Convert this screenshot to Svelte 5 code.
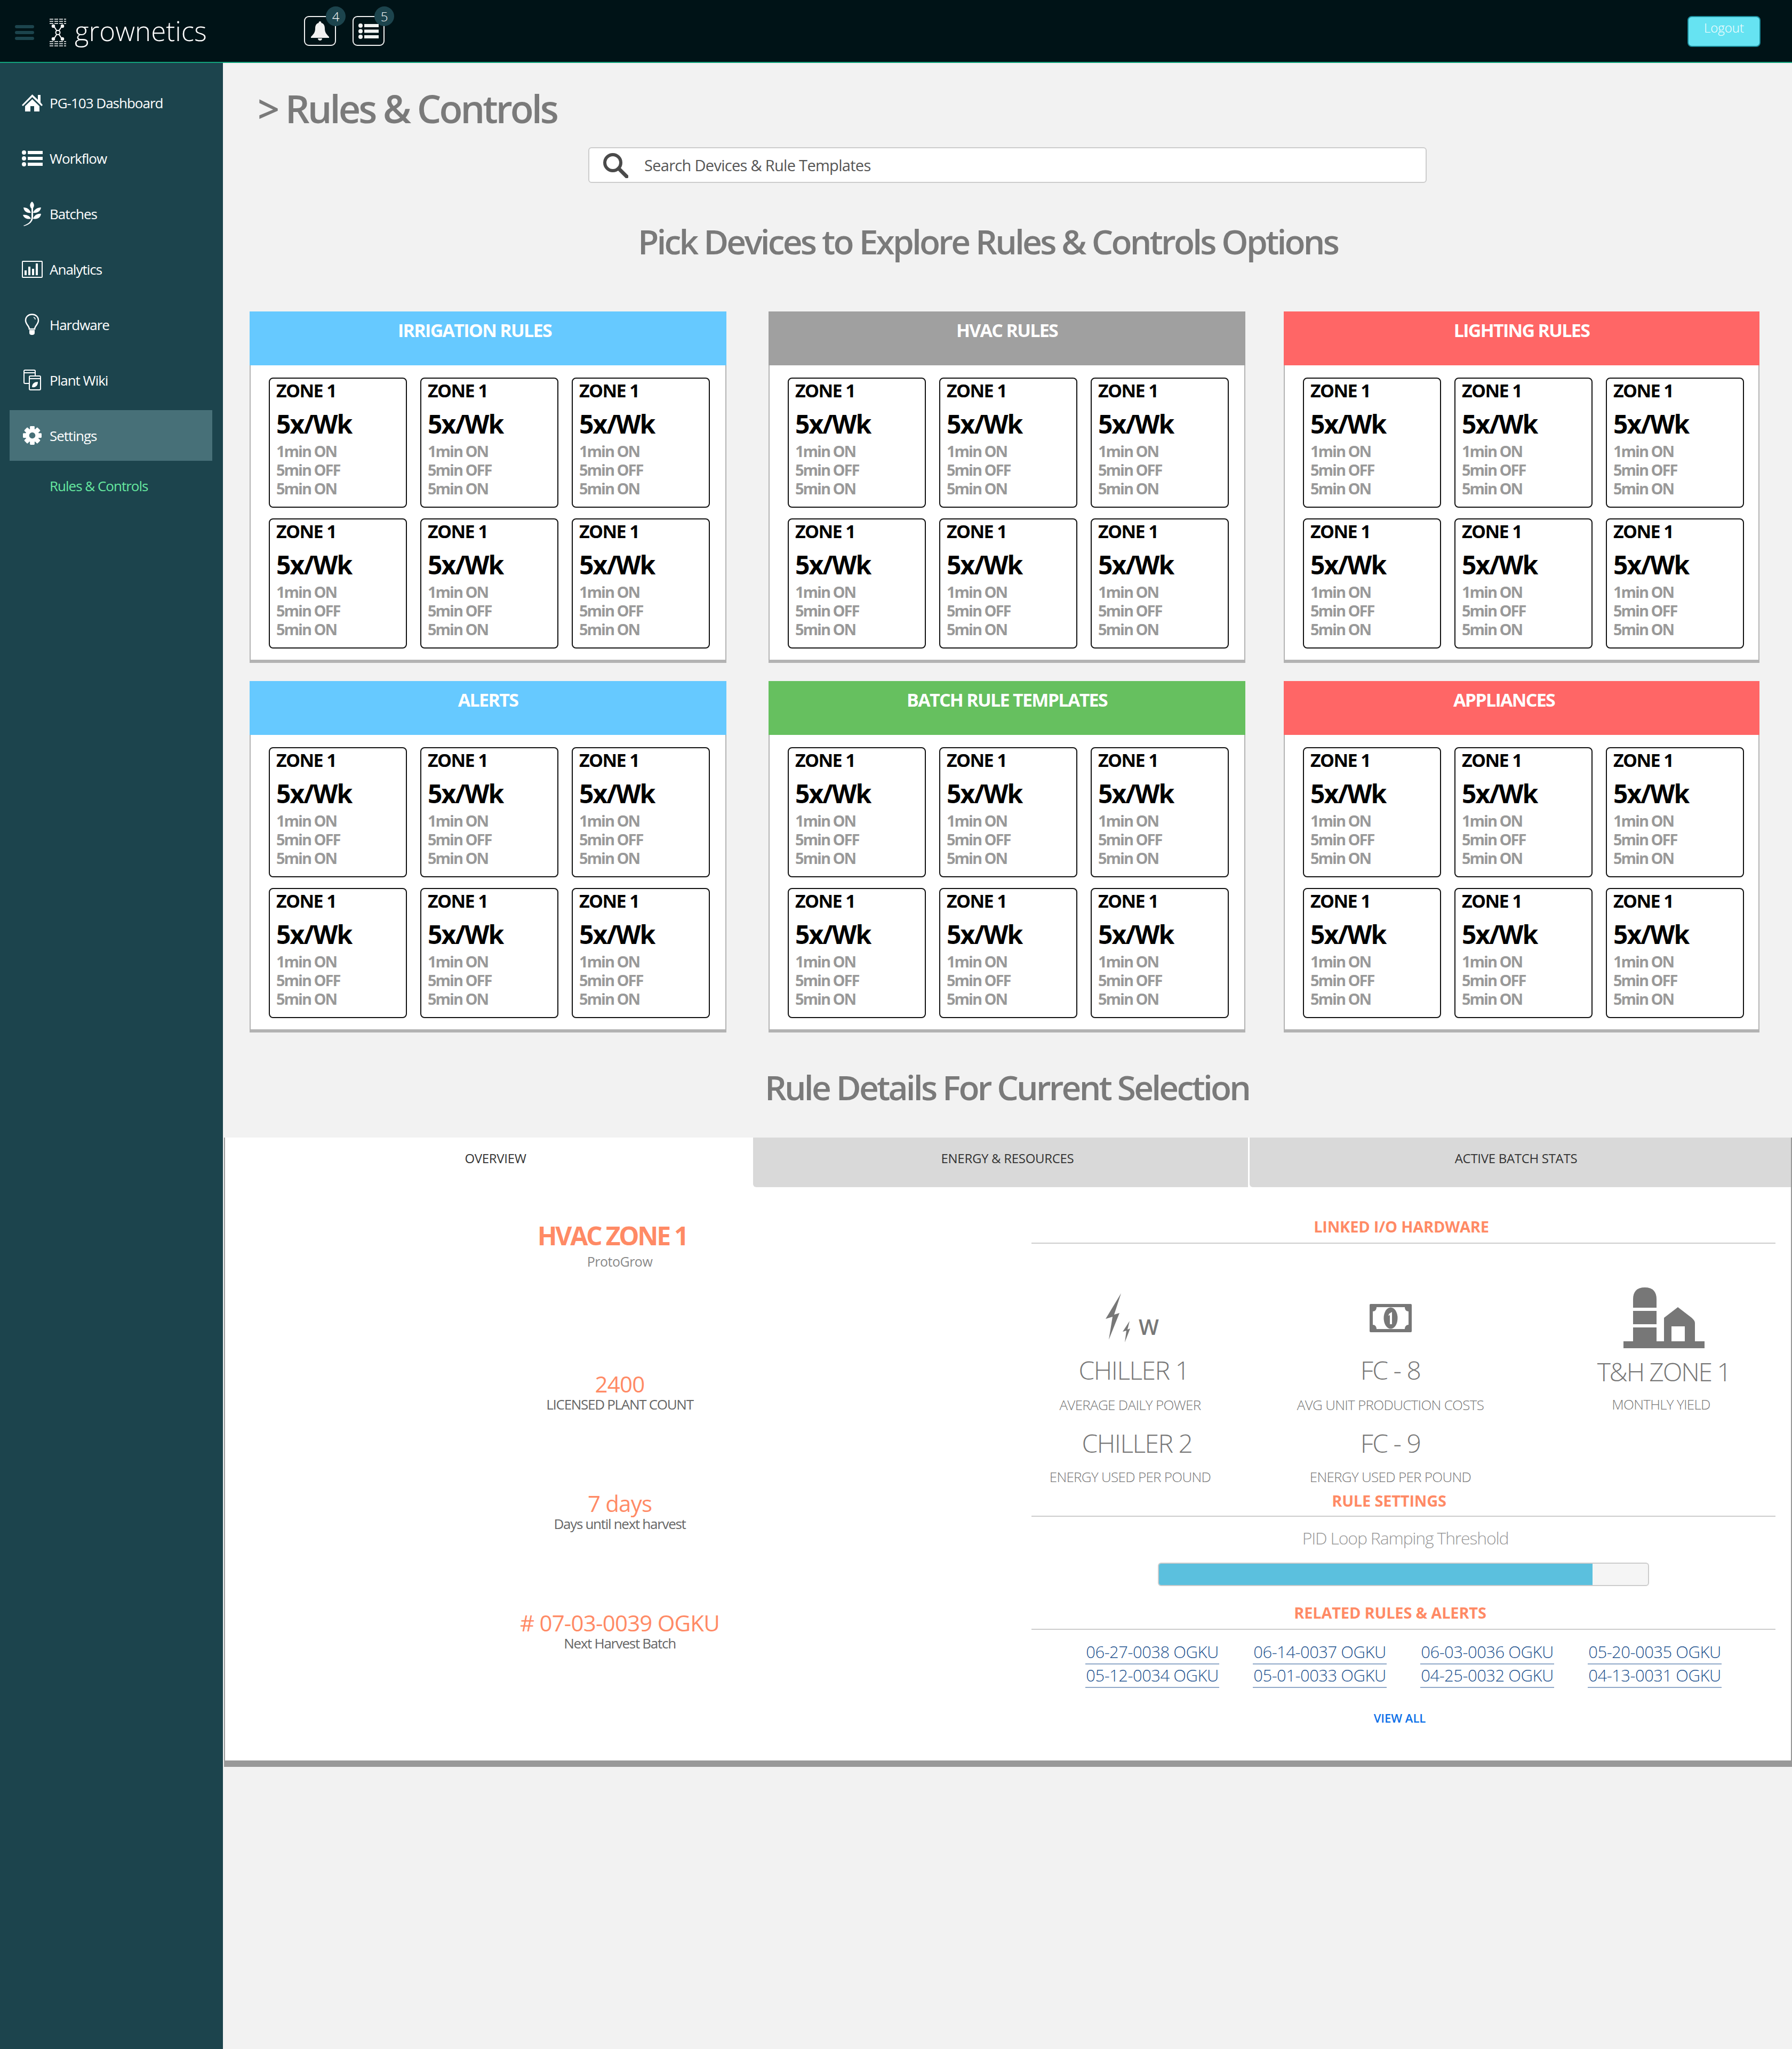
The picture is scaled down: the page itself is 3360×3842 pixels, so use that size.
<script>
	const navItems = [
		{ label: 'PG-103 Dashboard', icon: 'home' },
		{ label: 'Workflow', icon: 'list' },
		{ label: 'Batches', icon: 'plant' },
		{ label: 'Analytics', icon: 'chart' },
		{ label: 'Hardware', icon: 'bulb' },
		{ label: 'Plant Wiki', icon: 'wiki' },
		{ label: 'Settings', icon: 'gear', active: true }
	];

	const panels = [
		{ title: 'IRRIGATION RULES', color: '#66c9ff', shift: 50 },
		{ title: 'HVAC RULES', color: '#a0a0a0', shift: 0 },
		{ title: 'LIGHTING RULES', color: '#ff6666', shift: 0 },
		{ title: 'ALERTS', color: '#66c9ff', shift: 0 },
		{ title: 'BATCH RULE TEMPLATES', color: '#66c05f', shift: 0 },
		{ title: 'APPLIANCES', color: '#ff6666', shift: 66 }
	];

	const cards = [0, 1, 2, 3, 4, 5];

	const stats = [
		{ value: '2400', label: 'LICENSED PLANT COUNT' },
		{ value: '7 days', label: 'Days until next harvest' },
		{ value: '# 07-03-0039 OGKU', label: 'Next Harvest Batch' }
	];

	const links = [
		'06-27-0038 OGKU',
		'06-14-0037 OGKU',
		'06-03-0036 OGKU',
		'05-20-0035 OGKU',
		'05-12-0034 OGKU',
		'05-01-0033 OGKU',
		'04-25-0032 OGKU',
		'04-13-0031 OGKU'
	];
</script>

<div class="app">
	<header class="topbar">
		<div class="burger"><span></span><span></span><span></span></div>
		<svg class="logo" viewBox="0 0 33 52" fill="none" stroke="#fff" stroke-width="1.500">
			<path d="M1 1h31M1 5h31M1 9h31M1 43h31M1 47h31M1 51h31" stroke-dasharray="7 2" />
			<path d="M9 14l15 24M24 14L9 38" stroke-width="2" />
			<circle cx="8" cy="14" r="2.500" fill="#fff" />
			<circle cx="25" cy="14" r="2.500" fill="#fff" />
			<circle cx="16.500" cy="26" r="4" fill="#001317" stroke-width="2" />
			<circle cx="8" cy="38" r="2.500" fill="#fff" />
			<circle cx="25" cy="38" r="2.500" fill="#fff" />
		</svg>
		<span class="brand">grownetics</span>
		<div class="alert-box first">
			<svg viewBox="0 0 34 36" width="34" height="36" fill="#f2f2f2">
				<path d="M17 0c1.500 0 2.500 1 2.500 3 4.500 1.200 6.500 5 6.500 10 0 8 3 11 8 16v2H0v-2c5-5 8-8 8-16 0-5 2-8.800 6.500-10C14.500 1 15.500 0 17 0z" />
				<path d="M13 32h8c0 2.500-1.800 4-4 4s-4-1.500-4-4z" />
			</svg>
			<span class="badge">4</span>
		</div>
		<div class="alert-box">
			<svg viewBox="0 0 38 29" width="38" height="29" fill="#f2f2f2">
				<circle cx="4" cy="4" r="4" /><circle cx="4" cy="14.500" r="4" /><circle cx="4" cy="25" r="4" />
				<rect x="11" y="1" width="27" height="6" /><rect x="11" y="11.500" width="27" height="6" /><rect x="11" y="22" width="27" height="6" />
			</svg>
			<span class="badge">5</span>
		</div>
		<button class="logout">Logout</button>
	</header>

	<div class="layout">
		<aside class="sidebar">
			{#each navItems as item}
				<div class="nav-item" class:active={item.active}>
					<span class="nav-icon">
						{#if item.icon === 'home'}
							<svg viewBox="0 0 39 32" width="39" height="32" fill="#fff">
								<path d="M19.500 0L30 10V1h5v14l4 5-2 2L19.500 5 2 22l-2-2z" />
								<path d="M6 22L19.500 9 33 22v10H23V22h-7v10H6z" />
							</svg>
						{:else if item.icon === 'list'}
							<svg viewBox="0 0 39 30" width="39" height="30" fill="#fff">
								<circle cx="4" cy="4" r="4" /><circle cx="4" cy="15" r="4" /><circle cx="4" cy="26" r="4" />
								<rect x="11" y="1" width="28" height="6" /><rect x="11" y="12" width="28" height="6" /><rect x="11" y="23" width="28" height="6" />
							</svg>
						{:else if item.icon === 'plant'}
							<svg viewBox="0 0 36 46" width="36" height="46" fill="#fff">
								<path d="M18 0c5 4 5 10 0 14-5-4-5-10 0-14z" />
								<path d="M2 11c7 0 12 4 14 10-8 1-13-3-14-10zM35 11c-1 7-7 11-15 10 2-6 8-10 15-10z" />
								<path d="M1 25c7-1 13 2 15 7-7 2-13-1-15-7zM35 23c-1 7-7 11-15 9 2-6 8-10 15-9z" />
								<path d="M17 12h3v17c0 8-6 14-17 17l-1-1c9-3 15-8 15-16z" />
							</svg>
						{:else if item.icon === 'chart'}
							<svg viewBox="0 0 39 32" width="39" height="32" fill="#fff">
								<path fill-rule="evenodd" d="M2 0h35a2 2 0 0 1 2 2v28a2 2 0 0 1-2 2H2a2 2 0 0 1-2-2V2a2 2 0 0 1 2-2zm0 2v28h35V2z" />
								<rect x="5" y="18" width="4" height="9" /><rect x="12" y="11" width="4" height="16" /><rect x="19" y="15" width="4" height="12" /><rect x="26" y="5" width="4" height="22" />
							</svg>
						{:else if item.icon === 'bulb'}
							<svg viewBox="0 0 28 41" width="28" height="41" fill="none" stroke="#fff" stroke-width="2.500">
								<path d="M9 29c0-6-7-9-7-16C2 6 7 1.500 14 1.500S26 6 26 13c0 7-7 10-7 16z" />
								<path d="M9 31h10v5c0 3-2 4-5 4s-5-1-5-4z" fill="#fff" stroke="none" />
								<path d="M17 7c2 .5 3 2 3 4" stroke-width="1.500" />
							</svg>
						{:else if item.icon === 'wiki'}
							<svg viewBox="0 0 33 39" width="33" height="39" fill="none" stroke="#fff" stroke-width="2">
								<path d="M10 26H3a2 2 0 0 1-2-2V3a2 2 0 0 1 2-2h17a2 2 0 0 1 2 2v8" />
								<path d="M1 6h21" />
								<rect x="11" y="12" width="21" height="26" rx="2" />
								<path d="M11 17h21" />
								<path d="M16 33c0-7 5-10 11-10 0 7-4 11-11 10z" fill="#fff" stroke="none" />
							</svg>
						{:else}
							<svg viewBox="-18 -18 36 36" width="35" height="35">
								<g fill="#fff">
									{#each [0, 45, 90, 135, 180, 225, 270, 315] as a}
										<rect x="-4.500" y="-18" width="9" height="10" rx="1.500" transform="rotate({a})" />
									{/each}
								</g>
								<circle r="9.500" fill="none" stroke="#fff" stroke-width="7" />
							</svg>
						{/if}
					</span>
					<span>{item.label}</span>
				</div>
			{/each}
			<div class="nav-sub">Rules &amp; Controls</div>
		</aside>

		<main class="content">
			<h1 class="page-title">&gt; Rules &amp; Controls</h1>

			<div class="search">
				<svg viewBox="0 0 48 48" width="48" height="48" fill="none" stroke="#4a4a4a" stroke-width="6">
					<circle cx="19" cy="19" r="15" />
					<path d="M30 30l15 15" stroke-width="7" stroke-linecap="round" />
				</svg>
				<span>Search Devices &amp; Rule Templates</span>
			</div>

			<h2 class="section-head pick">Pick Devices to Explore Rules &amp; Controls Options</h2>

			<div class="panels">
				{#each panels as panel}
					<section class="panel">
						<div class="panel-head" style="background: {panel.color}; padding-right: {panel.shift}px">{panel.title}</div>
						<div class="panel-body">
							{#each cards as c}
								<div class="card">
									<div class="zone">ZONE 1</div>
									<div class="rate">5x/Wk</div>
									<div class="times">1min ON<br />5min OFF<br />5min ON</div>
								</div>
							{/each}
						</div>
					</section>
				{/each}
			</div>

			<h2 class="section-head details-head">Rule Details For Current Selection</h2>

			<section class="details">
				<div class="tabs">
					<div class="tab current">OVERVIEW</div>
					<div class="tab second">ENERGY &amp; RESOURCES</div>
					<div class="tab third">ACTIVE BATCH STATS</div>
				</div>
				<div class="details-body">
					<div class="overview">
						<div class="zone-name">HVAC ZONE 1</div>
						<div class="maker">ProtoGrow</div>
						{#each stats as s}
							<div class="stat">
								<div class="stat-value">{s.value}</div>
								<div class="stat-label">{s.label}</div>
							</div>
						{/each}
					</div>

					<div class="linked">
						<div class="sec-title" style="padding-right: 8px">LINKED I/O HARDWARE</div>
						<div class="hw-grid">
							<div class="hw">
								<div class="hw-icon bolt-wrap">
									<svg viewBox="0 0 48 92" width="48" height="92" fill="#777">
										<path d="M30 0L1 48l13-4L7 87l20-50-10 3z" />
										<path d="M46 52L33 72l7-2-3 22 10-26-5 2z" />
									</svg>
									<span class="watt">W</span>
								</div>
								<div class="hw-val nudge-a">CHILLER 1</div>
								<div class="hw-label">AVERAGE DAILY POWER</div>
							</div>
							<div class="hw">
								<div class="hw-icon">
									<svg viewBox="0 0 79 53" width="79" height="53">
										<rect width="79" height="53" rx="2" fill="#777" />
										<path d="M13 6h53c0 5 3 8 7 8v25c-4 0-7 3-7 8H13c0-5-3-8-7-8V14c4 0 7-3 7-8z" fill="#fff" />
										<ellipse cx="39.500" cy="26.500" rx="13" ry="20" fill="#777" />
										<path d="M37 18l5-3v23h-4V21l-3 1z" fill="#fff" />
									</svg>
								</div>
								<div class="hw-val">FC - 8</div>
								<div class="hw-label">AVG UNIT PRODUCTION COSTS</div>
							</div>
							<div class="hw">
								<div class="hw-icon">
									<svg viewBox="0 0 152 114" width="152" height="114" fill="#777">
										<path d="M18 38V22C18 8 25 0 40 0s22 8 22 22v16z" />
										<rect x="18" y="44" width="44" height="25" />
										<rect x="18" y="75" width="44" height="26" />
										<path d="M76 57l26-20 26 20c4 4 6 6 6 10v34h-19V73H90v28H76z" />
										<rect y="101" width="152" height="13" />
									</svg>
								</div>
								<div class="hw-val tall">T&amp;H ZONE 1</div>
								<div class="hw-label tall-label">MONTHLY YIELD</div>
							</div>
							<div class="hw row-two">
								<div class="hw-val nudge-b">CHILLER 2</div>
								<div class="hw-label">ENERGY USED PER POUND</div>
							</div>
							<div class="hw row-two">
								<div class="hw-val">FC - 9</div>
								<div class="hw-label">ENERGY USED PER POUND</div>
							</div>
						</div>

						<div class="sec-title rule-title" style="padding-right: 54px">RULE SETTINGS</div>
						<div class="pid">PID Loop Ramping Threshold</div>
						<div class="bar"><div class="bar-fill" style="width: 88.700%"></div></div>

						<div class="sec-title related-title" style="padding-right: 50px">RELATED RULES &amp; ALERTS</div>
						<div class="links">
							{#each links as link}
								<span class="link">{link}</span>
							{/each}
						</div>
						<div class="view-all">VIEW ALL</div>
					</div>
				</div>
			</section>
		</main>
	</div>
</div>

<style>
	:global(body) {
		margin: 0;
		background: #f2f2f2;
	}
	.app {
		width: 3360px;
		height: 3842px;
		display: flex;
		flex-direction: column;
		overflow: hidden;
		font-family: 'Open Sans', 'Noto Sans', sans-serif;
		font-stretch: 88%;
	}
	.topbar {
		height: 116px;
		flex: none;
		display: flex;
		align-items: flex-start;
		position: relative;
		background: #001317;
		border-bottom: 2px solid #12a37c;
	}
	.burger {
		width: 36px;
		margin: 47px 0 0 28px;
		display: flex;
		flex-direction: column;
		gap: 5px;
	}
	.burger span {
		height: 6px;
		border-radius: 3px;
		background: #1c444d;
	}
	.logo {
		width: 33px;
		height: 52px;
		margin: 35px 0 0 28px;
	}
	.brand {
		margin: 24px 0 0 15px;
		width: 415px;
		font-size: 51px;
		line-height: 66px;
		font-weight: 300;
		font-stretch: 100%;
		color: #fff;
		white-space: nowrap;
	}
	.alert-box {
		width: 60px;
		height: 56px;
		margin: 30px 0 0 31px;
		box-sizing: border-box;
		border: 2px solid #f2f2f2;
		border-radius: 9px;
		position: relative;
		display: flex;
		align-items: center;
		justify-content: center;
	}
	.alert-box.first {
		margin-left: 15px;
	}
	.badge {
		position: absolute;
		top: -20px;
		right: -20px;
		width: 37px;
		height: 37px;
		border-radius: 50%;
		background: #1c444d;
		color: #fff;
		font-size: 24px;
		font-weight: 300;
		line-height: 37px;
		text-align: center;
	}
	.logout {
		position: absolute;
		left: 3164px;
		top: 30px;
		width: 137px;
		height: 58px;
		box-sizing: border-box;
		padding: 0 0 16px;
		border: 2px solid #1a8a99;
		border-radius: 8px;
		background: #66e3f2;
		color: #fff;
		font-family: inherit;
		font-stretch: inherit;
		font-size: 24px;
		font-weight: 300;
	}
	.layout {
		flex: 1;
		display: flex;
		min-height: 0;
	}
	.sidebar {
		width: 418px;
		flex: none;
		box-sizing: border-box;
		padding-top: 18px;
		background: #1c444d;
		color: #fff;
		letter-spacing: -1px;
	}
	.nav-item {
		height: 95px;
		margin: 9px 20px 0 18px;
		padding-left: 20px;
		display: flex;
		align-items: center;
		gap: 11px;
		font-size: 26px;
		font-weight: 500;
	}
	.nav-item.active {
		background: #477078;
	}
	.nav-icon {
		width: 44px;
		display: flex;
		justify-content: center;
	}
	.nav-sub {
		margin: 28px 0 0 93px;
		font-size: 26px;
		line-height: 38px;
		font-weight: 500;
		color: #66e8a0;
	}
	.content {
		flex: 1;
		min-width: 0;
	}
	.page-title {
		margin: 45px 0 0 65px;
		font-size: 72px;
		line-height: 80px;
		font-weight: 600;
		letter-spacing: -4px;
		color: #7a7a7a;
	}
	.search {
		width: 1572px;
		height: 67px;
		box-sizing: border-box;
		margin: 33px 0 0 685px;
		padding-left: 25px;
		display: flex;
		align-items: center;
		gap: 30px;
		background: #fff;
		border: 2px solid #ccc;
		border-radius: 6px;
		font-size: 29px;
		letter-spacing: -.7px;
		color: #555;
	}
	.section-head {
		margin: 0;
		font-size: 64px;
		line-height: 80px;
		font-weight: 600;
		letter-spacing: -3.800px;
		color: #7a7a7a;
		text-align: center;
	}
	.pick {
		margin: 70px 0 0 0;
		width: 2868px;
	}
	.panels {
		margin: 91px 0 0 50px;
		display: grid;
		grid-template-columns: 894px 894px 892px;
		column-gap: 79px;
		row-gap: 34px;
		width: 2860px;
	}
	.panel:nth-child(3n) {
		margin: 0 7px 0 -7px;
	}
	.panel-head {
		height: 101px;
		box-sizing: border-box;
		padding-top: 15px;
		font-size: 34px;
		line-height: 40px;
		font-weight: 700;
		letter-spacing: -1.700px;
		color: #fff;
		text-align: center;
	}
	.panel-body {
		height: 558px;
		box-sizing: border-box;
		padding: 23px 0 0 34px;
		display: grid;
		grid-template-columns: repeat(3, 259px);
		grid-auto-rows: 244px;
		column-gap: 25px;
		row-gap: 20px;
		background: #fff;
		border: 2px solid #b3b3b3;
		border-width: 0 2px 6px;
	}
	.card {
		box-sizing: border-box;
		padding: 2px 0 0 12px;
		border: 2px solid #111;
		border-radius: 8px;
		background: #fff;
	}
	.zone {
		font-size: 34px;
		line-height: 40px;
		font-weight: 700;
		letter-spacing: -1.600px;
		color: #000;
	}
	.rate {
		margin-top: 15px;
		font-size: 48px;
		line-height: 56px;
		font-weight: 700;
		letter-spacing: -2px;
		color: #000;
	}
	.times {
		margin-top: 5px;
		font-size: 29px;
		line-height: 35px;
		font-weight: 700;
		letter-spacing: -2px;
		color: #999;
	}
	.details-head {
		margin-top: 63px;
		margin-bottom: 54px;
		width: 2940px;
	}
	.details {
		margin: 0 0 0 2px;
		height: 1180px;
		box-sizing: border-box;
		display: flex;
		flex-direction: column;
		background: #fff;
		border: 2px solid #999;
		border-width: 0 2px 12px;
	}
	.tabs {
		height: 93px;
		flex: none;
		display: flex;
		gap: 3px;
	}
	.tab {
		box-sizing: border-box;
		padding-top: 21px;
		font-size: 24px;
		line-height: 36px;
		font-weight: 500;
		letter-spacing: -.3px;
		color: #333;
		text-align: center;
		background: #d9d9d9;
		border-radius: 0 0 0 6px;
	}
	.tab.current {
		width: 990px;
		background: #fff;
		padding-left: 24px;
	}
	.tab.second {
		width: 928px;
		margin-left: -3px;
		padding-left: 26px;
	}
	.tab.third {
		flex: 1;
		padding-right: 16px;
	}
	.details-body {
		flex: 1;
		display: flex;
		min-height: 0;
	}
	.overview {
		width: 1480px;
		flex: none;
		text-align: center;
	}
	.zone-name {
		margin-top: 61px;
		padding-right: 28px;
		font-size: 48px;
		line-height: 60px;
		font-weight: 700;
		letter-spacing: -3.200px;
		color: #ff8a65;
	}
	.maker {
		margin-top: 3px;
		margin-bottom: 192px;
		font-size: 25px;
		line-height: 30px;
		letter-spacing: -.5px;
		color: #888;
	}
	.stat {
		height: 76px;
		margin-top: 148px;
	}
	.stat-value {
		font-size: 42px;
		line-height: 46px;
		font-weight: 500;
		letter-spacing: -.8px;
		color: #ff8a65;
	}
	.stat-label {
		font-size: 26px;
		line-height: 30px;
		font-weight: 500;
		letter-spacing: -1.300px;
		color: #666;
	}
	.linked {
		width: 1395px;
		flex: none;
		margin-left: 32px;
	}
	.sec-title {
		box-sizing: border-box;
		padding-bottom: 10px;
		margin-top: 54px;
		font-size: 29px;
		line-height: 40px;
		font-weight: 700;
		letter-spacing: -.2px;
		color: #ff8a65;
		text-align: center;
		border-bottom: 2px solid #ccc;
	}
	.rule-title {
		margin-top: 8px;
		padding-bottom: 8px;
	}
	.related-title {
		margin-top: 30px;
	}
	.hw-grid {
		display: grid;
		grid-template-columns: 370px 606px 419px;
		margin-top: 69px;
		text-align: center;
		color: #777;
	}
	.hw-icon {
		height: 140px;
		display: flex;
		align-items: center;
		justify-content: center;
		position: relative;
	}
	.bolt-wrap svg {
		margin-right: 46px;
	}
	.watt {
		position: absolute;
		left: 201px;
		top: 63px;
		font-size: 40px;
		font-weight: 600;
		line-height: 48px;
		color: #777;
	}
	.hw-val {
		font-size: 48px;
		line-height: 56px;
		font-weight: 300;
		letter-spacing: -1.500px;
	}
	.nudge-a {
		padding-left: 14px;
	}
	.nudge-b {
		padding-left: 26px;
	}
	.hw-val.tall {
		margin-top: 3px;
		letter-spacing: -2.200px;
	}
	.hw-label {
		margin-top: 20px;
		font-size: 26px;
		line-height: 34px;
		font-weight: 300;
		letter-spacing: -.7px;
	}
	.hw-label.tall-label {
		margin-top: 16px;
		padding-right: 10px;
	}
	.row-two {
		padding-top: 27px;
	}
	.row-two .hw-label {
		margin-top: 18px;
	}
	.pid {
		margin-top: 20px;
		padding-left: 7px;
		font-size: 32px;
		line-height: 40px;
		font-weight: 300;
		letter-spacing: -1.200px;
		color: #999;
		text-align: center;
	}
	.bar {
		margin: 26px 0 0 237px;
		width: 921px;
		height: 44px;
		box-sizing: border-box;
		background: #f5f5f5;
		border: 2px solid #ccc;
		border-radius: 6px;
		overflow: hidden;
	}
	.bar-fill {
		height: 100%;
		background: #5bc0de;
	}
	.links {
		display: grid;
		grid-template-columns: repeat(4, 251px);
		column-gap: 63px;
		row-gap: 2px;
		margin: 23px 0 0 101px;
	}
	.link {
		padding-bottom: 4px;
		font-size: 31px;
		line-height: 36px;
		font-weight: 300;
		letter-spacing: -.5px;
		color: #1f5490;
		text-align: center;
		white-space: nowrap;
		border-bottom: 2px solid #8fa8c8;
	}
	.view-all {
		margin-top: 41px;
		padding-right: 14px;
		font-size: 22px;
		line-height: 30px;
		font-weight: 600;
		color: #0a6fe8;
		text-align: center;
	}
</style>
